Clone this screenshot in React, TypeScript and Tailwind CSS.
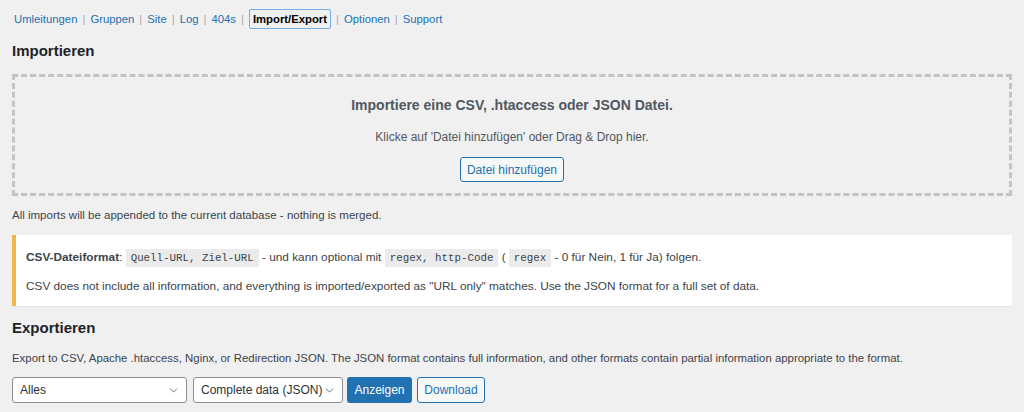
import { ChevronDown } from 'lucide-react';

const navItems = ['Umleitungen', 'Gruppen', 'Site', 'Log', '404s', 'Import/Export', 'Optionen', 'Support'];

const Code = ({ children }: { children: React.ReactNode }) => (
  <code className="bg-[#ebebeb] px-[5px] py-[3px] font-['Liberation_Mono',monospace] text-[10.8px] text-[#3c434a]">
    {children}
  </code>
);

const Select = ({ label, width }: { label: string; width: string }) => (
  <div
    className={`box-border flex h-[26px] items-center justify-between rounded-[3px] border border-[#8c8f94] bg-white pl-[7px] pr-[6px] text-[12px] text-[#2c3338] ${width}`}
  >
    <span className="whitespace-nowrap">{label}</span>
    <ChevronDown className="size-[13px] shrink-0 text-[#646970]" strokeWidth={1.75} />
  </div>
);

export default function App() {
  return (
    <div className="min-h-[412px] w-[1024px] bg-[#f0f0f1] px-3 pt-[9px] font-['Liberation_Sans',Arial,sans-serif] text-[11.5px] text-[#3c434a]">
      {/* ? Nav */}
      <div className="flex h-[20px] items-center pl-[2px] text-[11.3px] leading-[16px]">
        {navItems.map((item, i) => (
          <div key={item} className="flex items-center">
            {item === 'Import/Export' ? (
              <span className="rounded-[2px] border border-[#72aee6] px-[3px] py-[1px] font-bold text-black">
                {item}
              </span>
            ) : (
              <span className="text-[#2271b1]">{item}</span>
            )}
            {i < navItems.length - 1 && <span className="px-[5px] text-[#a7aaad]">|</span>}
          </div>
        ))}
      </div>

      {/* ? Importieren */}
      <h2 className="mt-[12px] text-[15px] leading-[20px] font-semibold text-[#1d2327]">Importieren</h2>

      <div className="mt-[13px] box-border flex h-[122px] w-[1000px] flex-col items-center border-[3px] border-dashed border-[#c3c4c7] pt-[18px]">
        <h3 className="text-[14px] leading-[20px] font-bold text-[#50575e]">
          Importiere eine CSV, .htaccess oder JSON Datei.
        </h3>
        <p className="mt-[13px] text-[12px] leading-[18px] text-[#50575e]">
          Klicke auf 'Datei hinzufügen' oder Drag &amp; Drop hier.
        </p>
        <button className="mt-[11px] box-border h-[25px] w-[104px] rounded-[3px] border border-[#2271b1] bg-[#f6f7f7] text-[12px] text-[#2271b1]">
          Datei hinzufügen
        </button>
      </div>

      <p className="mt-[10px] leading-[18px]">All imports will be appended to the current database - nothing is merged.</p>

      {/* ? Notice */}
      <div className="mt-[11px] box-border h-[71px] w-[1000px] border-l-4 border-[#f0b849] bg-white pt-[13px] pl-[10px] text-[11.8px] shadow-[0_1px_1px_rgba(0,0,0,0.04)]">
        <p className="leading-[18px]">
          <span className="font-bold">CSV-Dateiformat</span>: <Code>Quell-URL, Ziel-URL</Code> - und kann optional mit{' '}
          <Code>regex, http-Code</Code> ( <Code>regex</Code> - 0 für Nein, 1 für Ja) folgen.
        </p>
        <p className="mt-[10px] leading-[18px]">
          CSV does not include all information, and everything is imported/exported as "URL only" matches. Use the
          JSON format for a full set of data.
        </p>
      </div>

      {/* ? Exportieren */}
      <h2 className="mt-[12px] text-[15px] leading-[20px] font-semibold text-[#1d2327]">Exportieren</h2>
      <p className="mt-[11px] text-[11.4px] leading-[18px]">
        Export to CSV, Apache .htaccess, Nginx, or Redirection JSON. The JSON format contains full information, and
        other formats contain partial information appropriate to the format.
      </p>

      <div className="mt-[10px] flex items-center">
        <Select label="Alles" width="w-[175px]" />
        <div className="ml-[6px]">
          <Select label="Complete data (JSON)" width="w-[150px]" />
        </div>
        <button className="ml-[4px] box-border h-[26px] w-[65px] rounded-[3px] bg-[#2271b1] text-[12px] text-white">
          Anzeigen
        </button>
        <button className="ml-[5px] box-border h-[26px] w-[68px] rounded-[3px] border border-[#2271b1] bg-[#f6f7f7] text-[12px] text-[#2271b1]">
          Download
        </button>
      </div>
    </div>
  );
}
